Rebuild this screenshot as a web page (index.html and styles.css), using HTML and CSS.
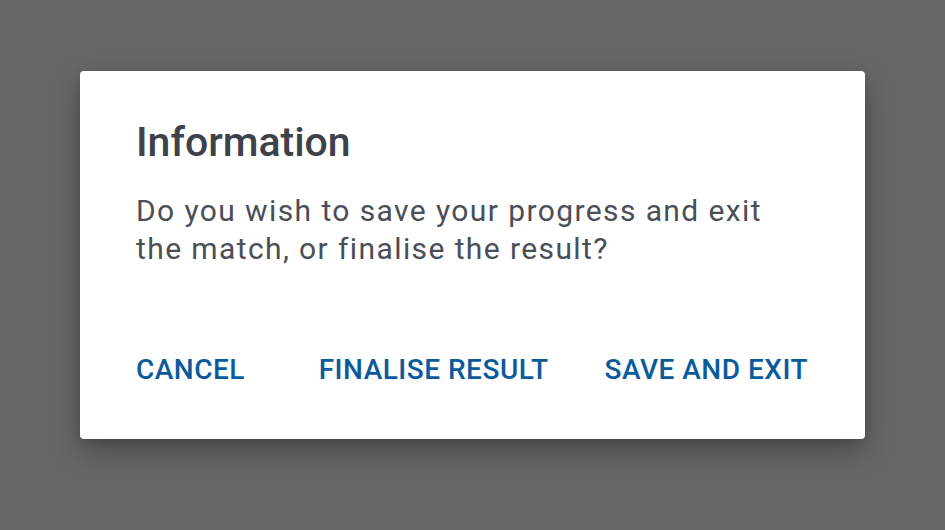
FILE: index.html
```html
<!DOCTYPE html>
<html lang="en">
<head>
    <meta charset="UTF-8">
    <meta name="viewport" content="width=device-width, initial-scale=1.0">
    <title>Information</title>
    <link rel="stylesheet" href="styles.css">
</head>
<body>

<div class="dialog">
    <h2 class="dialog-title">Information</h2>
    <p class="dialog-message">Do you wish to save your progress and exit<br>the match, or finalise the result?</p>
    <div class="dialog-actions">
        <button class="btn btn-cancel">CANCEL</button>
        <button class="btn btn-finalise">FINALISE RESULT</button>
        <button class="btn btn-save">SAVE AND EXIT</button>
    </div>
</div>

</body>
</html>
```

FILE: styles.css
```css
* {
    margin: 0;
    padding: 0;
    box-sizing: border-box;
}
body {
    background: #676767;
    font-family: Roboto, 'Liberation Sans', sans-serif;
    width: 945px;
    height: 530px;
    padding-top: 71px;
    padding-left: 80px;
}
.dialog {
    background: #fff;
    width: 785px;
    height: 368px;
    border-radius: 4px;
    box-shadow: 0 12px 30px rgba(0, 0, 0, 0.28), 0 4px 10px rgba(0, 0, 0, 0.12);
    padding: 46px 57px 0 56px;
}
.dialog-title {
    font-size: 41px;
    line-height: 50px;
    font-weight: 500;
    color: #3d424a;
}
.dialog-message {
    margin-top: 25px;
    font-size: 30px;
    line-height: 38px;
    letter-spacing: 1.4px;
    color: #4a4e56;
}
.dialog-actions {
    margin-top: 86px;
    display: flex;
    gap: 56px;
}
.btn {
    background: none;
    border: none;
    font-family: inherit;
    font-size: 28px;
    line-height: 32px;
    letter-spacing: 0.5px;
    font-weight: 500;
    color: #0b5b9c;
    cursor: pointer;
}
.btn-finalise {
    margin-left: auto;
}
```
